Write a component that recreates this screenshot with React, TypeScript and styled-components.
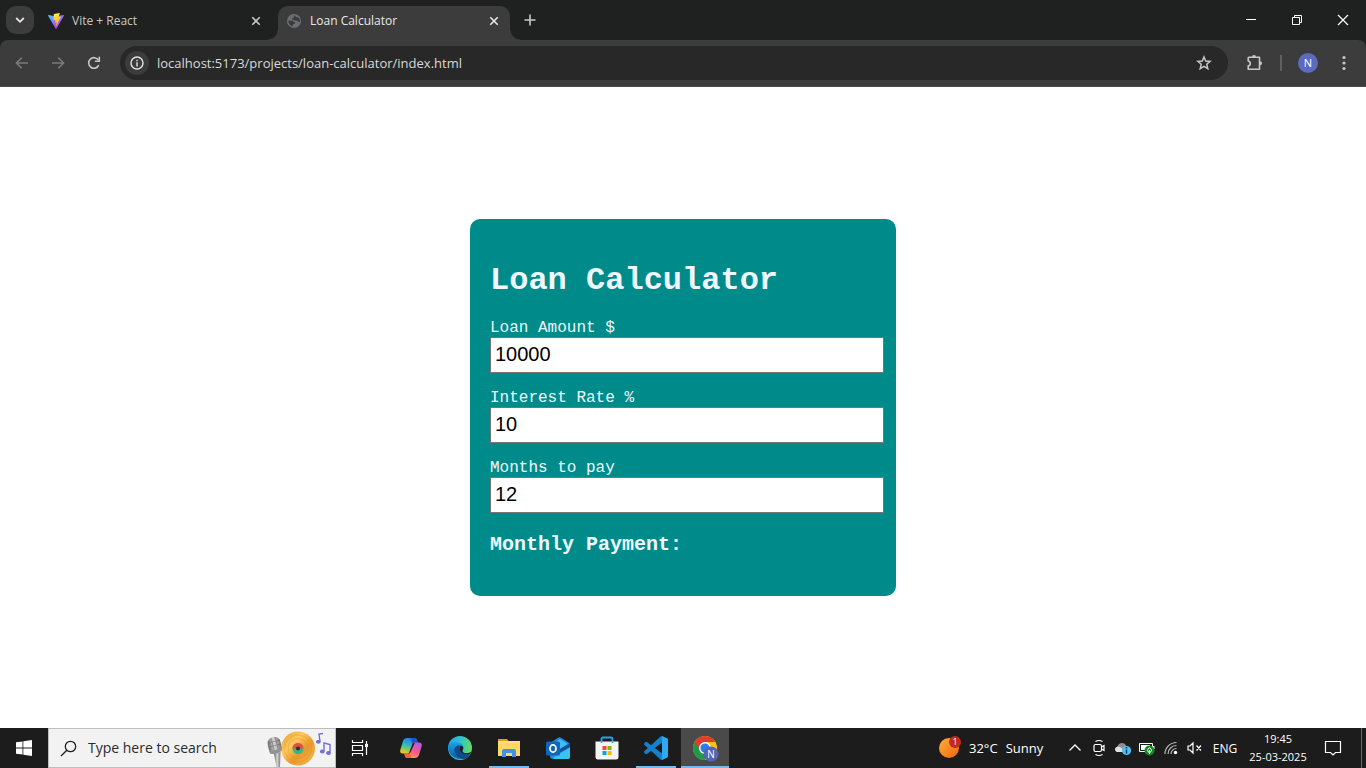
import React, { useState } from "react";
import styled, { createGlobalStyle, css } from "styled-components";

const GlobalStyle = createGlobalStyle`
  *, *::before, *::after { box-sizing: border-box; }
  body { margin: 0; background: #ffffff; font-family: "Open Sans", "Noto Sans", sans-serif; }
  button, input { font-family: inherit; }
  svg { display: block; flex: none; }
`;

const colors = {
  strip: "#1f2120",
  toolbar: "#3c3c3c",
  omnibox: "#282828",
  icon: "#c7c7c7",
  muted: "#7b7b7b",
  taskbar: "#1c1c1c",
  underline: "#76b9ed",
  card: "#008b8b",
};

const Screen = styled.div`
  display: flex;
  flex-direction: column;
  min-height: 100vh;
`;

/* Browser frame */

const BrowserFrame = styled.header`
  background: ${colors.strip};
`;

const TabStrip = styled.div`
  display: flex;
  align-items: center;
  height: 40px;
  padding-left: 6px;
`;

const PlainButton = styled.button`
  display: flex;
  align-items: center;
  justify-content: center;
  flex: none;
  margin: 0;
  padding: 0;
  border: 0;
  background: transparent;
  color: inherit;
`;

const TabSearchButton = styled(PlainButton)`
  width: 28px;
  height: 28px;
  border-radius: 10px;
  background: ${colors.toolbar};
  color: #e3e3e3;
`;

const Tab = styled.div<{ $active?: boolean }>`
  position: relative;
  display: flex;
  align-items: center;
  align-self: flex-end;
  width: ${(p) => (p.$active ? 232 : 244)}px;
  height: 34px;
  padding: ${(p) => (p.$active ? "0 8px 5px" : "0 14px 5px")};
  color: ${(p) => (p.$active ? "#e8e8e8" : "#c7c7c7")};
  ${(p) =>
    p.$active &&
    css`
      border-radius: 10px 10px 0 0;
      background: ${colors.toolbar};
      &::before,
      &::after {
        content: "";
        position: absolute;
        bottom: 0;
        width: 10px;
        height: 10px;
      }
      &::before {
        right: 100%;
        background: radial-gradient(circle at 0 0, transparent 9px, ${colors.toolbar} 10px);
      }
      &::after {
        left: 100%;
        background: radial-gradient(circle at 100% 0, transparent 9px, ${colors.toolbar} 10px);
      }
    `}
`;

const TabTitle = styled.span`
  flex: 1;
  margin-left: 8px;
  font-size: 12px;
  line-height: 17px;
  white-space: nowrap;
`;

const TabClose = styled(PlainButton)`
  width: 16px;
  height: 16px;
`;

const NewTabButton = styled(PlainButton)`
  width: 28px;
  height: 28px;
  margin-left: 6px;
  color: ${colors.icon};
`;

const WindowControls = styled.div`
  display: flex;
  margin-left: auto;
`;

const WindowButton = styled(PlainButton)`
  width: 46px;
  height: 40px;
  color: #ffffff;
`;

const Toolbar = styled.div`
  display: flex;
  align-items: center;
  height: 47px;
  padding: 0 4px;
  border-bottom: 1px solid #4a4a4a;
  border-radius: 8px 8px 0 0;
  background: ${colors.toolbar};
`;

const ToolButton = styled(PlainButton)<{ $muted?: boolean }>`
  width: 36px;
  height: 34px;
  color: ${(p) => (p.$muted ? colors.muted : colors.icon)};
`;

const Omnibox = styled.div`
  display: flex;
  flex: 1;
  align-items: center;
  height: 34px;
  margin: 0 8px;
  padding: 0 6px 0 5px;
  border-radius: 17px;
  background: ${colors.omnibox};
`;

const SiteInfo = styled(PlainButton)`
  width: 24px;
  height: 24px;
  border-radius: 12px;
  background: ${colors.toolbar};
  color: #e3e3e3;
`;

const AddressInput = styled.input`
  flex: 1;
  min-width: 0;
  margin: 0 0 0 8px;
  padding: 0;
  border: 0;
  outline: 0;
  background: transparent;
  color: #dadada;
  font-size: 13px;
  line-height: 20px;
`;

const ToolDivider = styled.span`
  width: 2px;
  height: 16px;
  margin: 0 8px;
  background: #5f5f5f;
`;

const Avatar = styled.span`
  width: 20px;
  height: 20px;
  border-radius: 10px;
  background: #5c6bc0;
  color: #ffffff;
  font-size: 11px;
  line-height: 20px;
  text-align: center;
`;

/* Calculator page */

const Page = styled.main`
  display: flex;
  flex: 1;
  align-items: center;
  justify-content: center;
  background: #ffffff;
`;

const Card = styled.section`
  width: 426px;
  max-width: 100%;
  padding: 20px 12px 20px 20px;
  border-radius: 10px;
  background: ${colors.card};
  color: aliceblue;
  font-family: "Courier New", "Liberation Mono", monospace;
`;

const CardTitle = styled.h1`
  margin: 24px 0 20px;
  font-size: 32px;
  line-height: 36px;
`;

const Field = styled.div`
  display: flex;
  flex-direction: column;
  margin-bottom: 16px;
`;

const FieldLabel = styled.label`
  font-size: 16px;
  line-height: 18px;
`;

const FieldInput = styled.input`
  width: 100%;
  height: 36px;
  margin: 0;
  padding: 0 4px 2px;
  border: 1px solid #767676;
  border-radius: 0;
  background: #ffffff;
  color: #000000;
  font-family: "Liberation Sans", Arial, sans-serif;
  font-size: 20px;
`;

const Payment = styled.h2`
  margin: 20px 0;
  font-size: 20px;
  line-height: 23px;
`;

/* Desktop taskbar */

const Taskbar = styled.footer`
  display: flex;
  height: 40px;
  background: ${colors.taskbar};
  color: #ffffff;
`;

const TaskButton = styled(PlainButton)<{ $open?: boolean; $active?: boolean }>`
  position: relative;
  width: 48px;
  height: 40px;
  background: ${(p) => (p.$active ? "#4a4a4a" : "transparent")};
  ${(p) =>
    (p.$open || p.$active) &&
    css`
      &::after {
        content: "";
        position: absolute;
        right: ${p.$active ? 0 : 4}px;
        bottom: 0;
        left: ${p.$active ? 0 : 4}px;
        height: 2px;
        background: ${colors.underline};
      }
    `}
`;

const SearchBox = styled.label`
  display: flex;
  align-items: center;
  width: 288px;
  height: 40px;
  padding: 0 3px 0 11px;
  border: 1px solid #bdbdbd;
  background: #f2f2f2;
  color: #222222;
`;

const SearchInput = styled.input`
  flex: 1;
  min-width: 0;
  margin-left: 11px;
  padding: 0;
  border: 0;
  outline: 0;
  background: transparent;
  color: #2b2b2b;
  font-size: 14px;
  line-height: 20px;
  &::placeholder {
    color: #2b2b2b;
    opacity: 1;
  }
`;

const PinnedApps = styled.nav`
  display: flex;
  gap: 1px;
  margin-left: 3px;
`;

const Tray = styled.div`
  display: flex;
  align-items: center;
  margin-left: auto;
`;

const Weather = styled(PlainButton)`
  justify-content: flex-start;
  gap: 8px;
  height: 40px;
  width: 124px;
  font-size: 13px;
  line-height: 20px;
  white-space: nowrap;
`;

const WeatherText = styled.span`
  display: flex;
  gap: 8px;
`;

const TrayButton = styled(PlainButton)`
  width: 24px;
  height: 40px;
`;

const Language = styled(PlainButton)`
  width: 36px;
  height: 40px;
  margin-right: 3px;
  font-size: 12px;
`;

const Clock = styled(PlainButton)`
  flex-direction: column;
  width: 64px;
  height: 40px;
  font-size: 11px;
  line-height: 18px;
`;

const NotificationButton = styled(PlainButton)`
  width: 46px;
  height: 40px;
`;

const ShowDesktop = styled(PlainButton)`
  width: 5px;
  height: 40px;
  margin-left: 5px;
  border-left: 1px solid #6a6a6a;
`;

/* Icons */

type StrokeProps = { w?: number; h?: number; sw?: number; children: React.ReactNode };

const Stroke = ({ w = 16, h = 16, sw = 1.6, children }: StrokeProps) => (
  <svg width={w} height={h} viewBox={`0 0 ${w} ${h}`} fill="none" stroke="currentColor" strokeWidth={sw} aria-hidden="true">
    {children}
  </svg>
);

const CloseIcon = () => (
  <Stroke w={10} h={10}><path d="M1.3 1.3l7.4 7.4M8.7 1.3L1.3 8.7" /></Stroke>
);

const ViteIcon = () => (
  <svg width="16" height="16" viewBox="0 0 32 32" aria-hidden="true">
    <defs>
      <linearGradient id="viteA" x1="0" y1="0" x2="0.6" y2="0.9">
        <stop offset="0" stopColor="#41d1ff" /><stop offset="1" stopColor="#bd34fe" />
      </linearGradient>
      <linearGradient id="viteB" x1="0.4" y1="0" x2="0.6" y2="1">
        <stop offset="0" stopColor="#ffea83" /><stop offset="0.2" stopColor="#ffdd35" /><stop offset="1" stopColor="#ffa800" />
      </linearGradient>
    </defs>
    <path fill="url(#viteA)" d="M31.8 5.4L16.9 31.3c-.3.6-1.1.6-1.5 0L.2 5.4c-.4-.6.2-1.4.9-1.3L16 6.8l14.9-2.7c.7-.1 1.2.7.9 1.3z" />
    <path fill="url(#viteB)" d="M23 .1L12 2.2c-.2 0-.3.2-.3.4L11 14.1c0 .3.2.5.5.4l3.1-.7c.3-.1.5.2.5.5l-.9 4.5c-.1.3.2.5.5.4l1.9-.6c.3-.1.6.2.5.5l-1.5 7c-.1.4.5.7.8.3l9.3-18.2c.2-.3-.1-.6-.5-.6l-3.2.6c-.3.1-.6-.2-.5-.5L23.5.6c.1-.3-.2-.6-.5-.5z" />
  </svg>
);

const GlobeIcon = () => (
  <svg width="16" height="16" viewBox="0 0 16 16" aria-hidden="true">
    <circle cx="8" cy="8" r="7" fill="#6b6e73" />
    <path fill="#3c3c3c" d="M8.5 2.3c1 .3 1 1.700 2.200 1.700l2.300.9c.8 1.200 1 2.600.8 4l-2-.4c-.6-1.200-1.900-1.200-2.600-.7L7.500 6.900 6 6.500l.3-1.500 1.400-.6zM2.300 7.600l3.900.2c1 .2 1.100 1 2.100 1.300.9.3 1.100.8.6 1.700L7 11.300 6.500 13.500c-2.300-.6-4.100-2.800-4.200-5.900z" />
  </svg>
);

const RestoreIcon = () => (
  <Stroke w={12} h={12} sw={1}><path d="M1.5 3.500h7v7h-7zM3.500 3.500v-2h7v7h-2" /></Stroke>
);

const BackIcon = ({ flip = false }: { flip?: boolean }) => (
  <Stroke>
    {flip ? <path d="M2 8h11M8.3 2.700L13.600 8l-5.300 5.300" /> : <path d="M14 8H3M7.700 2.700L2.400 8l5.300 5.300" />}
  </Stroke>
);

const ReloadIcon = () => (
  <Stroke>
    <path d="M12.800 10.200A5.300 5.300 0 1 1 12.500 5.200" />
    <path d="M13.300 1.800v4.400H8.900" />
  </Stroke>
);

const InfoIcon = () => (
  <Stroke w={14} h={14} sw={1.4}>
    <circle cx="7" cy="7" r="6" /><path d="M7 6.200v4.200M7 3.700v1.500" />
  </Stroke>
);

const StarIcon = () => (
  <Stroke sw={1.5}>
    <path d="M8 2l1.700 4 4.400.4-3.300 2.900 1 4.300L8 11.300l-3.800 2.300 1-4.300L1.900 6.400 6.300 6z" />
  </Stroke>
);

const PuzzleIcon = () => (
  <Stroke w={18} h={18}>
    <path d="M4 3.300h10.500v11.900H3.200v-3.300c2.700-.4 2.700-4.500 0-4.900V4.100q0-.8.8-.8z" strokeLinejoin="round" />
    <path d="M7 3a2 2 0 0 1 4 0zM15 7.200a2 2 0 0 1 0 4z" fill="currentColor" stroke="none" />
  </Stroke>
);

const DotsIcon = () => (
  <svg width="4" height="16" viewBox="0 0 4 16" fill="currentColor" aria-hidden="true">
    <circle cx="2" cy="2.500" r="1.600" /><circle cx="2" cy="8" r="1.600" /><circle cx="2" cy="13.500" r="1.600" />
  </svg>
);

const WindowsIcon = () => (
  <svg width="16" height="16" viewBox="0 0 16 16" fill="#ffffff" aria-hidden="true">
    <path d="M0 2.300l6.500-.9v6.200H0zM7.300 1.300L16 0v7.600H7.300zM0 8.400h6.500v6.200L0 13.700zM7.300 8.400H16V16l-8.700-1.300z" />
  </svg>
);

const SearchArt = () => (
  <svg width="68" height="38" viewBox="0 0 68 38" aria-hidden="true">
    <defs>
      <linearGradient id="mic" x1="0" x2="1">
        <stop offset="0" stopColor="#6d6d6d" /><stop offset="0.5" stopColor="#d4d4d4" /><stop offset="1" stopColor="#777" />
      </linearGradient>
      <linearGradient id="disc" x1="0" y1="0" x2="1" y2="1">
        <stop offset="0" stopColor="#e59a29" /><stop offset="0.35" stopColor="#ffca60" /><stop offset="0.6" stopColor="#e8992a" /><stop offset="1" stopColor="#f7bd50" />
      </linearGradient>
    </defs>
    <circle cx="34" cy="19.500" r="17" fill="url(#disc)" />
    <g fill="none" stroke="#d88d25" strokeWidth="0.600" opacity="0.600">
      <circle cx="34" cy="19.500" r="13.500" /><circle cx="34" cy="19.500" r="10" />
    </g>
    <circle cx="34" cy="19.500" r="5.500" fill="#36b58c" />
    <path d="M28.500 19.500a5.500 5.500 0 0 1 11 0z" fill="#e54d42" />
    <circle cx="34" cy="19.500" r="2" fill="#3a2a20" />
    <path d="M10 25l6.500-2-.5 15h-3.500z" fill="url(#mic)" />
    <rect x="4" y="8" width="13" height="17" rx="6" fill="url(#mic)" transform="rotate(-12 10 16)" />
    <path d="M4 14l12-3M5 18l12-3M7 9l4 15M11 8l4 15" stroke="#555" strokeWidth="0.700" opacity="0.600" />
    <path d="M5 21.500q6 1 12.500-3.500l.5 3q-5 5.500-12 3.500z" fill="#929292" />
    <g fill="#6f70d8" stroke="#6f70d8" strokeWidth="1.400">
      <path d="M56 12.500l-1-7.500 4-.5" fill="none" /><ellipse cx="54.300" cy="12.800" rx="1.700" ry="1.200" />
      <path d="M60 22.500V14l6 1.500v8" fill="none" /><ellipse cx="58.300" cy="22.500" rx="1.700" ry="1.200" /><ellipse cx="64.500" cy="24" rx="1.700" ry="1.200" />
    </g>
  </svg>
);

const TaskViewIcon = () => (
  <svg width="18" height="16" viewBox="0 0 18 16" fill="none" stroke="#ffffff" strokeWidth="1.200" aria-hidden="true">
    <path d="M1.500 0v2.500h10V0M1.500 16v-2.500h10V16M1.500 5.500h10v5h-10zM15.500 1v14" />
    <path d="M14 4h3v3h-3z" fill="#ffffff" stroke="none" />
  </svg>
);

const CopilotIcon = () => (
  <svg width="24" height="24" viewBox="0 0 24 24" aria-hidden="true">
    <defs>
      <linearGradient id="copA" x1="0.6" y1="0" x2="0.3" y2="1">
        <stop offset="0" stopColor="#1f7be8" /><stop offset="0.45" stopColor="#2cb7c9" /><stop offset="0.75" stopColor="#8ccc4b" /><stop offset="1" stopColor="#f7c531" />
      </linearGradient>
      <linearGradient id="copB" x1="0.7" y1="0" x2="0.3" y2="1">
        <stop offset="0" stopColor="#b659e8" /><stop offset="0.5" stopColor="#f0588f" /><stop offset="1" stopColor="#ff9b52" />
      </linearGradient>
    </defs>
    <path d="M8 2h7.500c1.500 0 2.200 1 2.600 2.300L18.700 6.500h-2.500c-1.600 0-2.400 1-2.900 2.100L10.500 16c-.5 1.300-1.300 1.500-2.500 1.500H4c-2.200 0-3.300-1.300-2.700-3.600L4 5C4.600 3 6 2 8 2z" fill="url(#copA)" />
    <path d="M12 2h3.500c1.500 0 2.200 1 2.600 2.300l.7 2.200h-2.600c-1.600 0-2.400 1-2.900 2.100z" fill="#1857c5" />
    <path d="M16 22H8.500C7 22 6.300 21 5.900 19.700L5.300 17.500h2.500c1.600 0 2.400-1 2.900-2.100L13.500 8c.5-1.300 1.300-1.500 2.500-1.500h4c2.200 0 3.300 1.300 2.700 3.600L20 19c-.6 2-2 3-4 3z" fill="url(#copB)" />
    <path d="M5.300 17.500h2.500c1.600 0 2.400-1 2.900-2.100L12 22H8.500C7 22 6.300 21 5.900 19.700z" fill="#f2603c" />
    <path d="M13.300 8.600q.8-2.100 2.700-2.100l-4.500 9.800q-.8 1.200-2.200 1.200 1-.6 1.200-1.500z" fill="#1c1c1c" />
  </svg>
);

const EdgeIcon = () => (
  <svg width="24" height="24" viewBox="0 0 24 24" aria-hidden="true">
    <defs>
      <linearGradient id="edgeA" x1="0" y1="0.3" x2="1" y2="0.5">
        <stop offset="0" stopColor="#24a6e8" /><stop offset="0.5" stopColor="#31c4cd" /><stop offset="1" stopColor="#6adb57" />
      </linearGradient>
      <linearGradient id="edgeB" x1="0" y1="0" x2="0" y2="1">
        <stop offset="0" stopColor="#1fa3e7" /><stop offset="1" stopColor="#0c59a4" />
      </linearGradient>
    </defs>
    <circle cx="12" cy="12" r="12" fill="url(#edgeA)" />
    <path d="M.1 11.200C1 7 5 5.800 8 6c5 .2 8 3 7.500 6.600-.2 1-1.100 1.500-1.100 2.300 0 1.300 2 2.300 4.600 2.300 1.600 0 2.700-.4 3.800-1A12 12 0 0 1 .1 11.200z" fill="url(#edgeB)" />
    <path d="M9.500 9.600C6 11 5.600 15 7.500 18c1.800 3 5 4.800 8.800 5.200A12 12 0 0 0 22.800 16.200c-4.600 2-9.500 1.400-10.800-1.600-.8-1.900.4-3.600-.3-4.600-.5-.7-1.300-.8-2.200-.4z" fill="#114a8b" />
    <path d="M12 14.600c-.8-1.900.4-3.600-.3-4.600.8-.7 3.300-.1 3.600 1.500.2 1.700-.9 2.100-.9 3.400 0 1.400 2.200 2.400 4.600 2.300 2 0 3.500-.8 4.400-1.700-.3.800-.5 1.200-.8 1.700-4.200 2-9.300.4-10.600-2.600z" fill="#1c1c1c" />
  </svg>
);

const ExplorerIcon = () => (
  <svg width="24" height="20" viewBox="0 0 24 20" aria-hidden="true">
    <path d="M1 1h9l2 2.500H1z" fill="#e59c1d" />
    <path d="M1 3h22v15H1z" fill="#ffd767" />
    <path d="M1 3h22v2H1z" fill="#ffdf85" />
    <path d="M5 19v-6q0-2 2-2h10q2 0 2 2v6h-4v-4H9v4z" fill="#3f94dc" />
  </svg>
);

const OutlookIcon = () => (
  <svg width="26" height="24" viewBox="0 0 26 24" aria-hidden="true">
    <path d="M5 7l8-5.200q1.500-1 3 0L25 7.500V12L12 17l-7-3z" fill="#1c86dc" />
    <path d="M9 7l6-4 8 5-9 6h-5z" fill="#3fbdf2" />
    <path d="M14 13.500L25 7v5.500L15 19z" fill="#114f9e" />
    <path d="M5 15l10 1.500L25 11v9.500q0 2.500-2.500 2.500h-14Q5 23 5 20z" fill="#1f8fe2" />
    <path d="M9 21l16-9.500v9q0 2.500-2.500 2.500h-14z" fill="#35c6f0" />
    <rect x="1" y="5.500" width="14" height="14" rx="1.500" fill="#0f66be" />
    <ellipse cx="8" cy="12.500" rx="3" ry="3.600" fill="none" stroke="#ffffff" strokeWidth="1.800" />
  </svg>
);

const StoreIcon = () => (
  <svg width="24" height="24" viewBox="0 0 24 24" aria-hidden="true">
    <path d="M6.500 7V3q0-1.500 1.500-1.500h8q1.500 0 1.500 1.500v4" fill="none" stroke="#25a5e5" strokeWidth="1.800" />
    <path d="M.5 5.500h23V21q0 2.500-2.500 2.500H3Q.5 23.500.5 21z" fill="#f4f4f4" />
    <path d="M6.500 5.500V7M17.500 5.500V7" stroke="#25a5e5" strokeWidth="1.800" />
    <path d="M7.500 10h4v4h-4z" fill="#f25022" /><path d="M12.500 10h4v4h-4z" fill="#7fba00" />
    <path d="M7.500 15h4v4h-4z" fill="#00a4ef" /><path d="M12.500 15h4v4h-4z" fill="#ffb900" />
  </svg>
);

const CodeIcon = () => (
  <svg width="24" height="24" viewBox="0 0 24 24" aria-hidden="true">
    <path
      fill="#1580cb"
      d="M23.150 2.587L18.210.21a1.494 1.494 0 0 0-1.705.29l-9.460 8.630-4.120-3.128a.999.999 0 0 0-1.276.057L.327 7.261A1 1 0 0 0 .326 8.740L3.899 12 .326 15.260a1 1 0 0 0 .001 1.479L1.650 17.940a.999.999 0 0 0 1.276.057l4.120-3.128 9.460 8.630a1.492 1.492 0 0 0 1.704.29l4.942-2.377A1.500 1.500 0 0 0 24 20.060V3.939a1.500 1.500 0 0 0-.850-1.352zm-5.146 14.861L10.826 12l7.178-5.448v10.896z"
    />
    <path fill="#2fa9f2" d="M18 .1l5.150 2.487A1.500 1.500 0 0 1 24 3.939V20.060a1.500 1.500 0 0 1-.850 1.352L18 23.900z" />
  </svg>
);

const ChromeIcon = () => (
  <svg width="28" height="28" viewBox="0 0 28 28" aria-hidden="true">
    <circle cx="14" cy="14" r="12" fill="#fbc116" />
    <path d="M14 14L3.600 8A12 12 0 0 0 14 26l5-9z" fill="#1e9a49" />
    <path d="M3.600 8A12 12 0 0 1 24.400 8H14l-5 9z" fill="#e33b2e" />
    <circle cx="14" cy="14" r="6" fill="#ffffff" />
    <circle cx="14" cy="14" r="4.600" fill="#2b7de9" />
    <circle cx="20" cy="20" r="7.500" fill="#5564b6" />
  </svg>
);

const ProfileBadge = styled.span`
  position: absolute;
  top: 20px;
  left: 23px;
  width: 14px;
  color: #ffffff;
  font-size: 10px;
  line-height: 12px;
  text-align: center;
`;

const WeatherIconBox = styled.span`
  position: relative;
  display: block;
  width: 22px;
  height: 22px;
`;

const WeatherBadge = styled.span`
  position: absolute;
  top: -1px;
  right: 0;
  width: 12px;
  height: 12px;
  border-radius: 6px;
  background: #c42b1c;
  font-size: 9px;
  line-height: 12px;
  text-align: center;
`;

const SunIcon = () => (
  <svg width="22" height="22" viewBox="0 0 22 22" aria-hidden="true">
    <defs>
      <linearGradient id="sun" x1="0" y1="0" x2="1" y2="1">
        <stop offset="0" stopColor="#ffb13b" /><stop offset="1" stopColor="#f0640f" />
      </linearGradient>
    </defs>
    <circle cx="10" cy="11" r="10" fill="url(#sun)" />
  </svg>
);

const MeetIcon = () => (
  <Stroke w={14} h={18} sw={1.2}>
    <path d="M3.500 2.500q3.500-2 7 0M3.500 15.500q3.500 2 7 0" />
    <rect x="2" y="5.500" width="7.500" height="7" rx="1.500" /><path d="M9.500 8L12 6.500v5L9.500 10" />
  </Stroke>
);

const CloudIcon = () => (
  <svg width="18" height="16" viewBox="0 0 18 16" aria-hidden="true">
    <path d="M4 12Q1 12 1 9.300 1 7 3.500 6.600 4.500 3 8 3q3 0 4 2.800 3 .2 3 3.200 0 3-3 3z" fill="#8f8f8f" />
    <path d="M3 12q-2-1-2-2.700Q1.300 7 4 6.500q3 0 4.500 2.500v3z" fill="#e2e2e2" />
    <circle cx="12.500" cy="10.500" r="4.600" fill="#4cc2f5" />
    <path d="M12.500 9.500v4M12.500 7v1.500" stroke="#103b52" strokeWidth="1.500" />
  </svg>
);

const BatteryIcon = () => (
  <svg width="18" height="16" viewBox="0 0 18 16" aria-hidden="true">
    <path d="M1.500 3.500h13v8h-13z" fill="none" stroke="#ffffff" /><path d="M3 5h9v5H3zM15 6h1.500v3H15z" fill="#ffffff" />
    <circle cx="11.500" cy="10.500" r="5" fill="#138a25" />
    <path d="M11.500 14v-4M11.500 7.500q-4 3.500 0 5 4-1.500 0-5z" fill="none" stroke="#ffffff" />
  </svg>
);

const WifiIcon = () => (
  <svg width="16" height="16" viewBox="0 0 16 16" fill="none" aria-hidden="true">
    <path d="M2 14A11.500 11.500 0 0 1 13.500 2.500M5 14A8.500 8.500 0 0 1 13.500 5.500M8 14A5.500 5.500 0 0 1 13.500 8.500" stroke="#bababa" strokeWidth="1.200" />
    <circle cx="12.500" cy="12.500" r="1.700" fill="#ffffff" />
  </svg>
);

const pinned = [
  { name: "Copilot", icon: <CopilotIcon /> },
  { name: "Microsoft Edge", icon: <EdgeIcon /> },
  { name: "File Explorer", icon: <ExplorerIcon />, open: true },
  { name: "Outlook", icon: <OutlookIcon /> },
  { name: "Microsoft Store", icon: <StoreIcon /> },
  { name: "Visual Studio Code", icon: <CodeIcon />, open: true },
];

const trayItems = [
  { name: "Show hidden icons", icon: <Stroke w={14} h={14} sw={1.3}><path d="M1.500 9.500L7 4l5.500 5.500" /></Stroke> },
  { name: "Meet now", icon: <MeetIcon /> },
  { name: "OneDrive", icon: <CloudIcon /> },
  { name: "Battery", icon: <BatteryIcon /> },
  { name: "Network", icon: <WifiIcon /> },
  { name: "Volume", icon: <Stroke sw={1.2}><path d="M1 6v4h2l3 3V3L3 6zM9.500 5.500l4.500 5M14 5.500l-4.500 5" /></Stroke> },
];

export default function App() {
  const [amount, setAmount] = useState("10000");
  const [rate, setRate] = useState("10");
  const [months, setMonths] = useState("12");

  const fields = [
    { id: "loan-amount", label: "Loan Amount $", value: amount, set: setAmount },
    { id: "interest-rate", label: "Interest Rate %", value: rate, set: setRate },
    { id: "months", label: "Months to pay", value: months, set: setMonths },
  ];

  return (
    <>
      <GlobalStyle />
      <Screen>
        <BrowserFrame>
          <TabStrip>
            <TabSearchButton aria-label="Search tabs">
              <Stroke w={10} h={10} sw={1.8}><path d="M1.200 3L5 6.800 8.800 3" /></Stroke>
            </TabSearchButton>
            <Tab>
              <ViteIcon />
              <TabTitle>Vite + React</TabTitle>
              <TabClose aria-label="Close Vite + React"><CloseIcon /></TabClose>
            </Tab>
            <Tab $active>
              <GlobeIcon />
              <TabTitle>Loan Calculator</TabTitle>
              <TabClose aria-label="Close Loan Calculator"><CloseIcon /></TabClose>
            </Tab>
            <NewTabButton aria-label="New tab">
              <Stroke w={12} h={12}><path d="M6 .5v11M.5 6h11" /></Stroke>
            </NewTabButton>
            <WindowControls>
              <WindowButton aria-label="Minimize">
                <Stroke w={10} h={10} sw={1}><path d="M0 4.500h10" /></Stroke>
              </WindowButton>
              <WindowButton aria-label="Restore"><RestoreIcon /></WindowButton>
              <WindowButton aria-label="Close">
                <Stroke w={12} h={12} sw={1.2}><path d="M1 1l10 10M11 1L1 11" /></Stroke>
              </WindowButton>
            </WindowControls>
          </TabStrip>
          <Toolbar>
            <ToolButton $muted aria-label="Back"><BackIcon /></ToolButton>
            <ToolButton $muted aria-label="Forward"><BackIcon flip /></ToolButton>
            <ToolButton aria-label="Reload"><ReloadIcon /></ToolButton>
            <Omnibox>
              <SiteInfo aria-label="Site information"><InfoIcon /></SiteInfo>
              <AddressInput aria-label="Address" defaultValue="localhost:5173/projects/loan-calculator/index.html" />
              <ToolButton aria-label="Bookmark"><StarIcon /></ToolButton>
            </Omnibox>
            <ToolButton aria-label="Extensions"><PuzzleIcon /></ToolButton>
            <ToolDivider />
            <ToolButton aria-label="Profile"><Avatar>N</Avatar></ToolButton>
            <ToolButton aria-label="Menu"><DotsIcon /></ToolButton>
          </Toolbar>
        </BrowserFrame>

        <Page>
          <Card>
            <CardTitle>Loan Calculator</CardTitle>
            {fields.map((f) => (
              <Field key={f.id}>
                <FieldLabel htmlFor={f.id}>{f.label}</FieldLabel>
                <FieldInput id={f.id} value={f.value} onChange={(e) => f.set(e.target.value)} />
              </Field>
            ))}
            <Payment>Monthly Payment:</Payment>
          </Card>
        </Page>

        <Taskbar>
          <TaskButton aria-label="Start"><WindowsIcon /></TaskButton>
          <SearchBox>
            <Stroke w={17} h={17} sw={1.3}><circle cx="10.500" cy="6.500" r="5.200" /><path d="M6.800 10.200L1 16" /></Stroke>
            <SearchInput aria-label="Search" placeholder="Type here to search" />
            <SearchArt />
          </SearchBox>
          <TaskButton aria-label="Task view"><TaskViewIcon /></TaskButton>
          <PinnedApps>
            {pinned.map((app) => (
              <TaskButton key={app.name} aria-label={app.name} $open={app.open}>{app.icon}</TaskButton>
            ))}
            <TaskButton aria-label="Google Chrome" $active>
              <ChromeIcon />
              <ProfileBadge>N</ProfileBadge>
            </TaskButton>
          </PinnedApps>
          <Tray>
            <Weather>
              <WeatherIconBox><SunIcon /><WeatherBadge>1</WeatherBadge></WeatherIconBox>
              <WeatherText><span>32°C</span><span>Sunny</span></WeatherText>
            </Weather>
            {trayItems.map((item) => (
              <TrayButton key={item.name} aria-label={item.name}>{item.icon}</TrayButton>
            ))}
            <Language>ENG</Language>
            <Clock><span>19:45</span><span>25-03-2025</span></Clock>
            <NotificationButton aria-label="Notifications">
              <Stroke w={18} h={18} sw={1.2}><path d="M1.500 2.500h15v11h-5L9 16l-2.500-2.500h-5z" /></Stroke>
            </NotificationButton>
            <ShowDesktop aria-label="Show desktop" />
          </Tray>
        </Taskbar>
      </Screen>
    </>
  );
}
